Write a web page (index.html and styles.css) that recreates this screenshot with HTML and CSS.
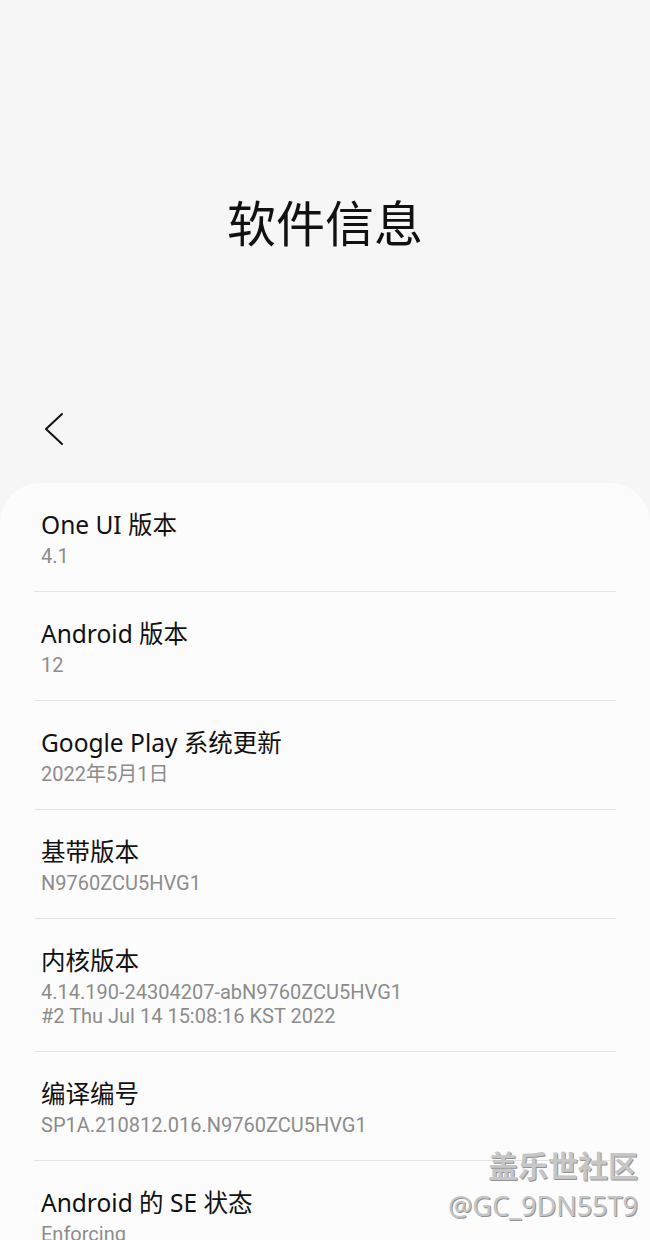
FILE: index.html
```html
<!DOCTYPE html>
<html lang="zh-CN">
<head>
  <meta charset="UTF-8" />
  <meta name="viewport" content="width=device-width, initial-scale=1.0"/>
  <title>软件信息</title>
  <link rel="stylesheet" href="styles.css">
</head>
<body>

  <div class="header">
    <h1>软件信息</h1>
  </div>

  <div class="toolbar">
    <button class="back" aria-label="返回">
      <svg width="24" height="36" viewBox="0 0 24 36">
        <polyline points="18,3 2,18 18,33" fill="none" stroke="#111" stroke-width="2" stroke-linecap="round" stroke-linejoin="round"/>
      </svg>
    </button>
  </div>

  <div class="card">
    <div class="row">
      <div class="title">One UI 版本</div>
      <div class="sub">4.1</div>
    </div>
    <div class="row">
      <div class="title">Android 版本</div>
      <div class="sub">12</div>
    </div>
    <div class="row">
      <div class="title">Google Play 系统更新</div>
      <div class="sub">2022年5月1日</div>
    </div>
    <div class="row">
      <div class="title">基带版本</div>
      <div class="sub">N9760ZCU5HVG1</div>
    </div>
    <div class="row">
      <div class="title">内核版本</div>
      <div class="sub">4.14.190-24304207-abN9760ZCU5HVG1</div>
      <div class="sub sub-next">#2 Thu Jul 14 15:08:16 KST 2022</div>
    </div>
    <div class="row">
      <div class="title">编译编号</div>
      <div class="sub">SP1A.210812.016.N9760ZCU5HVG1</div>
    </div>
    <div class="row">
      <div class="title">Android 的 SE 状态</div>
      <div class="sub">Enforcing</div>
    </div>
  </div>

  <div class="watermark">
    <div class="wm-name">盖乐世社区</div>
    <div class="wm-id">@GC_9DN55T9</div>
  </div>

</body>
</html>
```

FILE: styles.css
```css
body {
  margin: 0;
  height: 1240px;
  overflow: hidden;
  background-color: #f6f6f6;
  font-family: "Noto Sans", "Noto Sans CJK SC", sans-serif;
  color: #111;
  position: relative;
}

.header {
  padding-top: 191px;
  text-align: center;
}

h1 {
  margin: 0;
  font-size: 49px;
  line-height: 64px;
  font-weight: 400;
}

.toolbar {
  margin-top: 146px;
  height: 56px;
  display: flex;
  align-items: center;
  padding-left: 41px;
}

.back {
  border: none;
  background: none;
  padding: 0;
  width: 30px;
  height: 40px;
  display: flex;
  align-items: center;
  justify-content: center;
}

.card {
  margin-top: 26px;
  background-color: #fcfcfc;
  border-radius: 40px 40px 0 0;
  padding: 0 34px;
}

.row {
  padding: 26px 7px 23px;
  border-bottom: 1px solid #e3e3e3;
}

.title {
  font-size: 24.5px;
  line-height: 32px;
}

.sub {
  margin-top: 3px;
  font-family: Roboto, "Noto Sans CJK SC", sans-serif;
  font-size: 20px;
  line-height: 24px;
  color: #8c8c8c;
}

.sub-next {
  margin-top: 0;
}

.watermark {
  position: absolute;
  right: 12px;
  top: 1146px;
  text-align: right;
  color: #c6c6c6;
  text-shadow: 1px 1px 0 #939393;
  font-family: "Noto Sans", "Noto Sans CJK SC", sans-serif;
}

.wm-name {
  font-size: 30px;
  line-height: 40px;
  font-weight: 700;
}

.wm-id {
  font-size: 27px;
  line-height: 40px;
}
```
